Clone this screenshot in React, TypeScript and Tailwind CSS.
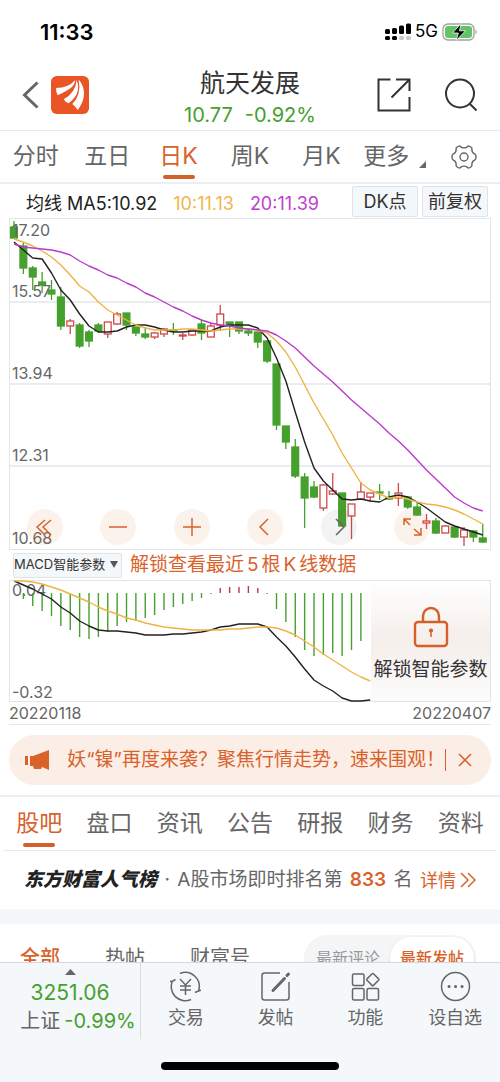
import type { ReactNode } from "react";

type Candle = [color: "g" | "r", high: number, top: number, bottom: number, low: number];

const STEP = 9.375;
const xAt = (i: number) => 5 + i * STEP;

const CANDLES: Candle[] = [
  ["g", 3, 9, 20, 20], ["g", 25, 28, 50, 56], ["g", 48, 50, 59, 72], ["g", 54, 64, 67, 75],
  ["g", 62, 72, 76, 82], ["g", 69, 79, 108, 112], ["r", 101, 103, 108, 116], ["g", 105, 107, 128, 130],
  ["g", 112, 114, 123, 129], ["g", 105, 107, 113, 115], ["r", 104, 104, 116, 120], ["r", 94, 96, 106, 107],
  ["g", 95, 95, 107, 112], ["g", 109, 109, 115, 118], ["g", 109, 116, 119, 121], ["r", 114, 115, 119, 121],
  ["r", 110, 111, 116, 119], ["g", 105, 112, 113, 117], ["r", 115, 117, 118, 122], ["r", 111, 112, 117, 118],
  ["g", 102, 106, 115, 122], ["r", 105, 108, 119, 119], ["r", 87, 96, 107, 113], ["g", 104, 104, 108, 119],
  ["g", 104, 104, 113, 116], ["g", 111, 113, 115, 118], ["g", 114, 114, 124, 130], ["g", 122, 123, 143, 145],
  ["g", 146, 146, 207, 212], ["g", 208, 208, 224, 231], ["g", 221, 229, 258, 260], ["g", 255, 259, 280, 310],
  ["g", 263, 269, 279, 280], ["r", 266, 267, 290, 293], ["r", 255, 273, 276, 277], ["g", 275, 275, 308, 309],
  ["r", 286, 286, 298, 321], ["r", 264, 274, 281, 282], ["r", 275, 275, 279, 284], ["g", 266, 274, 275, 282],
  ["g", 273, 280, 281, 282], ["r", 265, 275, 280, 288], ["g", 278, 279, 289, 291], ["g", 284, 289, 297, 298],
  ["r", 296, 303, 305, 311], ["g", 300, 303, 315, 316], ["r", 307, 308, 315, 315], ["g", 308, 309, 319, 320],
  ["r", 309, 312, 319, 328], ["g", 312, 313, 319, 324], ["g", 306, 320, 324, 325],
];

const MA5 = [
  24, 32, 40, 41, 55, 72, 82, 96, 108, 114, 114, 113, 109, 107, 107, 109, 112, 114, 114, 113, 113, 113, 109, 107, 107,
  107, 110, 120, 140, 163, 194, 224, 250, 263, 272, 281, 282, 281, 283, 284, 279, 277, 279, 284, 290, 297, 304, 308,
  311, 314, 317,
];
const MA10 = [
  21, 24, 28, 33, 39, 47, 57, 68, 74, 84, 92, 97, 102, 107, 110, 112, 112, 112, 111, 111, 112, 113, 112, 111, 111, 111,
  112, 115, 123, 134, 149, 167, 185, 201, 217, 235, 250, 265, 272, 276, 280, 279, 281, 284, 286, 287, 289, 292, 296,
  301, 306,
];
const MA20 = [
  26, 29, 30, 31, 32, 34, 37, 43, 48, 52, 57, 60, 65, 69, 75, 79, 84, 89, 93, 98, 102, 105, 107, 108, 110, 111, 112,
  113, 117, 123, 130, 139, 148, 156, 164, 173, 182, 190, 198, 206, 215, 223, 232, 242, 252, 261, 270, 279, 285, 290,
  293,
];

const MACD = [
  13, 19, 26, 31, 36, 46, 50, 57, 59, 57, 52, 46, 42, 41, 38, 35, 30, 27, 24, 21, 18, 14, 8, 7, 7, 6, 8, 14, 29, 42, 57,
  70, 76, 75, 73, 76, 70, 61,
];
const DIF = [
  1, 5, 9, 14, 19, 27, 33, 41, 46, 50, 51, 51, 52, 53, 55, 55, 55, 54, 54, 53, 52, 50, 47, 46, 44, 44, 44, 47, 57, 66,
  77, 89, 100, 106, 111, 118, 121, 121, 120,
];
const DEA = [
  1, 1, 2, 4, 7, 10, 14, 18, 22, 27, 31, 34, 38, 40, 43, 45, 47, 48, 49, 50, 50, 50, 50, 49, 49, 48, 47, 47, 48, 51, 55,
  61, 67, 74, 80, 86, 92, 97, 101,
];

const GREEN = "#45a02e";
const RED = "#d0494b";

const toPoints = (ys: number[], from = 0) => ys.map((y, i) => `${xAt(i + from)},${y}`).join(" ");

const macdColor = (y: number) => (y < 13 ? "#b8394f" : GREEN);

const periods = ["分时", "五日", "日K", "周K", "月K"];
const sections = ["股吧", "盘口", "资讯", "公告", "研报", "财务", "资料"];

export default function App() {
  return (
    <div className="flex h-screen flex-col bg-white font-['Inter','Noto_Sans_CJK_SC',sans-serif] text-[#333]">
      <main className="flex-1 overflow-y-auto [scrollbar-width:none]">
        <StatusBar />
        <Header />
        <PeriodTabs />
        <div className="mx-[9px]">
          <AverageRow />
          <PriceChart />
          <IndicatorRow />
          <MacdChart />
          <div className="flex h-[23px] items-center justify-between border-b border-[#e6e8ea] text-[16px] text-[#666]">
            <span>20220118</span>
            <span>20220407</span>
          </div>
          <Notice />
        </div>
        <SectionTabs />
        <Ranking />
        <div className="h-[15px] bg-[#f5f8fb]" />
        <Feed />
      </main>
      <BottomBar />
    </div>
  );
}

function StatusBar() {
  return (
    <div className="flex h-[60px] items-center justify-between pl-10 pr-[22px] pt-1 text-black">
      <span className="text-[22px] font-semibold">11:33</span>
      <div className="flex items-center gap-1">
        <svg width="26" height="18" viewBox="0 0 26 18">
          <rect x="0" y="6" width="5" height="5" rx="1.5" />
          <rect x="7" y="5" width="5" height="6" rx="1.5" />
          <rect x="14" y="2.5" width="5" height="8.5" rx="1.5" />
          <rect x="21" y="0.5" width="5" height="10.5" rx="1.5" />
          <rect x="0" y="13" width="5" height="4" rx="1.5" />
          <rect x="7" y="13" width="5" height="4" rx="1.5" />
          <rect x="14" y="13" width="5" height="4" rx="1.5" fill="#ccc" />
          <rect x="21" y="13" width="5" height="4" rx="1.5" fill="#ccc" />
        </svg>
        <span className="text-[17px]">5G</span>
        <svg width="36" height="18" viewBox="0 0 36 18">
          <rect x="1" y="1" width="31" height="16" rx="5" fill="none" stroke="#9aa59a" strokeWidth="1.3" />
          <rect x="3" y="3" width="27" height="12" rx="3" fill="#63c466" />
          <path d="M33.5 6.500c1.600.6 1.600 4.400 0 5z" fill="#9aa59a" />
          <path d="M19 0.500L10.500 10h5.800L14.200 17.500 23.500 7.800h-6z" fill="#000" stroke="#fff" strokeWidth="0.8" />
        </svg>
      </div>
    </div>
  );
}

function Header() {
  return (
    <header className="grid h-[71px] grid-cols-3 items-center border-b border-[#e6e8ea] px-[22px]">
      <div className="flex items-center gap-3">
        <button aria-label="返回">
          <svg width="17" height="28" viewBox="0 0 17 28" fill="none" stroke="#666" strokeWidth="3">
            <path d="M15.500 1.500L2.500 14l13 12.500" />
          </svg>
        </button>
        <svg width="38" height="38" viewBox="0 0 114 114">
          <rect width="114" height="114" rx="17" fill="#ea5526" />
          <g fill="#fff">
            <path d="M15 36Q52 36 73 12C70 34 52 42 20 58Q15 50 15 36z" />
            <path d="M38 70Q74 50 77 12C89 42 76 64 53 82Q44 80 38 70z" />
            <path d="M64 84Q92 56 83 11C103 32 107 68 80 102Q76 94 64 84z" />
          </g>
        </svg>
      </div>
      <div className="pt-1 text-center">
        <h1 className="text-[25px] leading-9 whitespace-nowrap">航天发展</h1>
        <p className="flex justify-center gap-3 text-[20px] leading-7 text-[#45a02e]">
          <span>10.77</span>
          <span>-0.92%</span>
        </p>
      </div>
      <div className="flex items-center justify-end gap-[33px]">
        <button aria-label="分享">
          <svg width="34" height="34" viewBox="0 0 34 34" fill="none" stroke="#333" strokeWidth="2">
            <path d="M13.500 1.500H1.500v31h31V19M19 1.500h13.500V13M32 2L14.500 19.500" />
          </svg>
        </button>
        <button aria-label="搜索">
          <svg width="34" height="34" viewBox="0 0 34 34" fill="none" stroke="#333" strokeWidth="2">
            <circle cx="16" cy="15.5" r="14" />
            <path d="M25.500 25.500l7 7" />
          </svg>
        </button>
      </div>
    </header>
  );
}

function PeriodTabs() {
  return (
    <nav className="grid h-[53px] grid-cols-7 border-b-2 border-[#eceef0] text-[23px] text-[#666]">
      {periods.map((p) => (
        <TabButton key={p} active={p === "日K"}>
          {p}
        </TabButton>
      ))}
      <button className="flex items-center justify-center gap-[10px] pl-1 whitespace-nowrap">
        更多
        <svg className="mt-4" width="7" height="7" viewBox="0 0 7 7" fill="#666">
          <path d="M7 0v7H0z" />
        </svg>
      </button>
      <button className="flex items-center justify-center" aria-label="设置">
        <svg width="26" height="26" viewBox="0 0 26 26" fill="none" stroke="#666" strokeWidth="1.4" strokeLinejoin="round">
          <path d="M7.200 2.500Q8.500 1.500 9.800 2.800Q13 5 16.200 2.800Q17.500 1.500 18.800 2.500L20 3.200Q21.300 4 20.900 5.800Q20.800 9 24 10.200Q25 10.800 25 13T24 15.800Q20.800 17 20.900 20.200Q21.300 22 20 22.800L18.800 23.500Q17.500 24.500 16.200 23.200Q13 21 9.800 23.200Q8.500 24.500 7.200 23.500L6 22.800Q4.700 22 5.100 20.200Q5.200 17 2 15.800Q1 15.200 1 13T2 10.200Q5.200 9 5.100 5.800Q4.700 4 6 3.200z" />
          <circle cx="13" cy="13" r="4" />
        </svg>
      </button>
    </nav>
  );
}

function TabButton({ active, children }: { active: boolean; children: ReactNode }) {
  return (
    <button className={`relative flex items-center justify-center whitespace-nowrap ${active ? "text-[#d9622b]" : ""}`}>
      {children}
      {active && <span className="absolute bottom-[3px] left-1/2 h-1 w-8 -translate-x-1/2 rounded-full bg-[#d45f2a]" />}
    </button>
  );
}

function AverageRow() {
  return (
    <div className="flex h-[34px] items-center justify-between pl-[17px]">
      <div className="flex gap-4 pt-1 text-[18px] whitespace-nowrap">
        <span className="text-[#222]">均线 MA5:10.92</span>
        <span className="text-[#efb650]">10:11.13</span>
        <span className="text-[#be3fd0]">20:11.39</span>
      </div>
      <div className="flex gap-1 pr-[3px] text-[18px] whitespace-nowrap">
        <button className="h-[31px] w-[66px] rounded-xs border border-[#dfe4e9] bg-[#f5f8fb]">DK点</button>
        <button className="h-[31px] w-[66px] rounded-xs border border-[#dfe4e9] bg-[#f5f8fb]">前复权</button>
      </div>
    </div>
  );
}

function PriceChart() {
  return (
    <div className="relative">
      <svg className="block w-full" viewBox="0 0 482 332">
        <g stroke="#e3e6e8" fill="none">
          <rect x="0.5" y="0.5" width="481" height="331" />
          <path d="M0 84h482M0 166h482M0 248h482" strokeWidth="1.5" />
        </g>
        {CANDLES.map(([color, high, top, bottom, low], i) => {
          const stroke = color === "g" ? GREEN : RED;
          return (
            <g key={i} stroke={stroke} strokeWidth="1.3">
              <path d={`M${xAt(i)} ${high}V${top}M${xAt(i)} ${bottom}V${low}`} />
              <rect
                x={xAt(i) - 3.4}
                y={top}
                width="6.8"
                height={Math.max(bottom - top, 1)}
                fill={color === "g" ? GREEN : "#fff"}
              />
            </g>
          );
        })}
        <g fill="none" strokeWidth="1.4" strokeLinejoin="round">
          <polyline points={toPoints(MA5)} stroke="#222" />
          <polyline points={toPoints(MA10)} stroke="#efb345" />
          <polyline points={toPoints(MA20)} stroke="#b93bcb" />
        </g>
        <g fill="#666" fontSize="16">
          <text x="3" y="18">17.20</text>
          <text x="3" y="79">15.57</text>
          <text x="3" y="161">13.94</text>
          <text x="3" y="243">12.31</text>
          <text x="3" y="326">10.68</text>
        </g>
      </svg>
      <div className="absolute bottom-[5px] left-[18px] right-[61px] flex justify-between text-[#d9622b]">
        <ChartButton label="最左">
          <path d="M18 11l-8 7 8 8M24 11l-8 7 8 8" />
        </ChartButton>
        <ChartButton label="缩小">
          <path d="M9 18h18" />
        </ChartButton>
        <ChartButton label="放大">
          <path d="M9 18h18M18 9v18" />
        </ChartButton>
        <ChartButton label="左移">
          <path d="M21 10l-8 8 8 8" />
        </ChartButton>
        <ChartButton label="右移" muted>
          <path d="M15 10l8 8-8 8" />
        </ChartButton>
        <ChartButton label="全屏">
          <path d="M16 16l-6-6M10 16v-6h7M20 20l7 6M27 19v7h-7" />
        </ChartButton>
      </div>
    </div>
  );
}

function ChartButton({ label, muted, children }: { label: string; muted?: boolean; children: ReactNode }) {
  return (
    <button
      aria-label={label}
      className={`size-9 rounded-full ${muted ? "bg-[#66666614] text-[#666]" : "bg-[#e0703018]"}`}
    >
      <svg width="36" height="36" viewBox="0 0 36 36" fill="none" stroke="currentColor" strokeWidth="1.5">
        {children}
      </svg>
    </button>
  );
}

function IndicatorRow() {
  return (
    <div className="flex h-[30px] items-center gap-2 pl-1">
      <div className="relative">
        <select
          aria-label="指标"
          className="block h-[25px] w-[109px] appearance-none rounded-xs border border-[#dfe4e9] bg-[#f5f8fb] text-[13px] text-[#333]"
        >
          <option>MACD智能参数</option>
        </select>
        <svg className="pointer-events-none absolute right-1 top-2" width="8" height="8" viewBox="0 0 8 8" fill="#555">
          <path d="M0 0h8L4 7z" />
        </svg>
      </div>
      <button className="text-[19px] leading-7 whitespace-nowrap text-[#d9622b]">
        解锁查看最近<span className="mx-[3px]">5</span>根<span className="mx-[3px]">K</span>线数据
      </button>
    </div>
  );
}

function MacdChart() {
  return (
    <div className="relative">
      <svg className="block w-full" viewBox="0 0 482 122">
        <rect x="0.5" y="0.5" width="481" height="121" fill="none" stroke="#e3e6e8" />
        <g fill="#666" fontSize="16">
          <text x="3" y="16">0.04</text>
          <text x="3" y="118">-0.32</text>
        </g>
        {MACD.map((y, i) => (
          <path key={i} d={`M${xAt(i)} 13V${y}`} stroke={macdColor(y)} strokeWidth="1.4" />
        ))}
        <g fill="none" strokeWidth="1.4" strokeLinejoin="round">
          <polyline points={toPoints(DIF)} stroke="#222" />
          <polyline points={toPoints(DEA)} stroke="#efb345" />
        </g>
      </svg>
      <button className="absolute inset-y-px right-px flex w-[119px] flex-col items-center justify-center gap-2 bg-linear-to-b from-white via-[#f5eeea] to-[#fcfcfc] pt-2 text-[19px] whitespace-nowrap">
        <svg width="36" height="42" viewBox="0 0 36 42" fill="none" stroke="#d45f2a" strokeWidth="2.4">
          <rect x="2" y="16" width="32" height="24" rx="3" />
          <path d="M10 16v-6a8 8 0 0 1 16 0v6" />
          <path d="M18 25v6" strokeWidth="1.5" />
          <circle cx="18" cy="24.5" r="1.5" fill="#d45f2a" strokeWidth="1.2" />
        </svg>
        解锁智能参数
      </button>
    </div>
  );
}

function Notice() {
  return (
    <div className="my-[10px] flex h-[50px] items-center rounded-full bg-[#fbeee6] pl-4 pr-[19px] text-[#d9622b]">
      <svg className="shrink-0" width="24" height="20" viewBox="0 0 24 20" fill="currentColor">
        <path d="M24 0v20l-7-3-1 2H9l-1-3H5V6h3zM0 6h3v9H0z" />
      </svg>
      <span className="ml-auto text-[19px] whitespace-nowrap">妖“镍”再度来袭？聚焦行情走势，速来围观！</span>
      <button className="flex items-center border-l border-[#d9622b] py-1 pl-3" aria-label="关闭">
        <svg width="14" height="14" viewBox="0 0 14 14" fill="none" stroke="currentColor" strokeWidth="1.5">
          <path d="M1 1l12 12M13 1L1 13" />
        </svg>
      </button>
    </div>
  );
}

function SectionTabs() {
  return (
    <div className="border-t-2 border-[#eceef0]">
      <nav className="mx-1 grid h-[54px] grid-cols-7 border-b border-[#e6e8ea] text-[23px] text-[#666]">
        {sections.map((s) => (
          <TabButton key={s} active={s === "股吧"}>
            {s}
          </TabButton>
        ))}
      </nav>
    </div>
  );
}

function Ranking() {
  return (
    <div className="flex h-[58px] items-center justify-between px-6 text-[19px] whitespace-nowrap text-[#666]">
      <strong className="font-black text-[#222] italic">东方财富人气榜</strong>
      <span>·</span>
      <span>A股市场即时排名第</span>
      <strong className="font-semibold text-[#d9622b]">833</strong>
      <span>名</span>
      <a href="#rank" className="flex items-center gap-1 text-[18px] text-[#d9622b]">
        详情
        <svg width="16" height="16" viewBox="0 0 16 16" fill="none" stroke="currentColor" strokeWidth="1.5">
          <path d="M1 1l7 7-7 7M8 1l7 7-7 7" />
        </svg>
      </a>
    </div>
  );
}

function Feed() {
  return (
    <div className="flex h-[68px] items-center justify-between pl-5 pr-6 text-[20px] whitespace-nowrap text-[#666]">
      <div className="flex gap-[45px]">
        <button className="font-medium text-[#d9622b]">全部</button>
        <button>热帖</button>
        <button>财富号</button>
      </div>
      <div className="flex h-[46px] rounded-full bg-[#f3f5f7] p-[2px] text-[16px]">
        <button className="px-[10px] text-[#999]">最新评论</button>
        <button className="rounded-full bg-white px-[10px] font-medium text-[#d9622b] shadow-sm">最新发帖</button>
      </div>
    </div>
  );
}

function BottomBar() {
  return (
    <footer className="shrink-0 border-t border-[#d5d8db] bg-[#f5f8fb] text-[#666]">
      <div className="flex h-[76px]">
        <button className="flex w-[141px] flex-col items-center border-r border-[#dcdfe2] pt-[6px] whitespace-nowrap">
          <svg width="11" height="6" viewBox="0 0 11 6" fill="currentColor">
            <path d="M5.500 0L11 6H0z" />
          </svg>
          <span className="mt-1 text-[21px] leading-7 text-[#45a02e]">3251.06</span>
          <span className="flex gap-1 pl-4 text-[20px] leading-7">
            上证<span className="text-[#45a02e]">-0.99%</span>
          </span>
        </button>
        <div className="grid flex-1 grid-cols-4">
          <BarItem label="交易">
            <path d="M10 2.500A14 14 0 0 1 28.500 20M21 28.500A14 14 0 0 1 2.500 10M25 21.500l3.500-1.500 3-1M0 10.500l3-.5 2.500-1.500M10 8l5.500 6L21 8M15.500 14v10M10 15h11M10 19h11" />
          </BarItem>
          <BarItem label="发帖">
            <path d="M20 2H4.500Q2 2 2 4.500v22Q2 29 4.500 29h22q2.500 0 2.500-2.500V11" />
            <path d="M13 19.500L24.500 7.500M27 4.500l1.500-1.500" strokeWidth="3" strokeLinecap="round" />
          </BarItem>
          <BarItem label="功能">
            <rect x="2.500" y="3" width="11.5" height="11.5" rx="1.5" />
            <rect x="2.500" y="17.5" width="11.5" height="11.5" rx="1.5" />
            <rect x="17" y="17.5" width="11.5" height="11.5" rx="1.5" />
            <rect x="18.2" y="4" width="9.2" height="9.2" rx="1" transform="rotate(45 22.8 8.6)" />
          </BarItem>
          <BarItem label="设自选">
            <circle cx="15.5" cy="15.5" r="14" />
            <path d="M9 15.500h.1M15.500 15.500h.1M22 15.500h.1" strokeWidth="3" strokeLinecap="round" />
          </BarItem>
        </div>
      </div>
      <div className="flex h-[43px] items-end justify-center pb-3">
        <div className="h-2 w-[178px] rounded-full bg-black" />
      </div>
    </footer>
  );
}

function BarItem({ label, children }: { label: string; children: ReactNode }) {
  return (
    <button className="flex flex-col items-center gap-1 pt-2 text-[18px] leading-6 whitespace-nowrap">
      <svg width="31" height="31" viewBox="0 0 31 31" fill="none" stroke="currentColor" strokeWidth="1.5">
        {children}
      </svg>
      {label}
    </button>
  );
}
